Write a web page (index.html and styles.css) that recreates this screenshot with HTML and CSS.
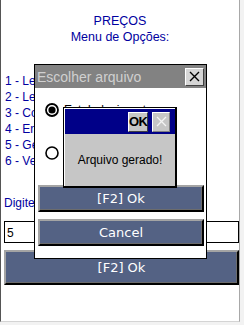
FILE: index.html
```html
<!DOCTYPE html>
<html lang="pt">
<head>
    <meta charset="UTF-8">
    <meta name="viewport" content="width=device-width, initial-scale=1.0">
    <title>Preços</title>
    <link rel="stylesheet" href="styles.css">
</head>
<body>

    <div class="screen">
        <div class="header">
            <p>PREÇOS</p>
            <p>Menu de Opções:</p>
        </div>

        <ul class="menu">
            <li>1 - Levantamento</li>
            <li>2 - Leitura</li>
            <li>3 - Consulta</li>
            <li>4 - Enviar</li>
            <li>5 - Gerar</li>
            <li>6 - Ver</li>
        </ul>

        <p class="prompt">Digite a opção:</p>
        <div class="field">5</div>
        <button class="btn btn-main">[F2] Ok</button>

        <!-- file chooser dialog -->
        <div class="dialog">
            <div class="dialog-title">
                <span>Escolher arquivo</span>
                <span class="close-btn">
                    <svg width="11" height="11" viewBox="0 0 11 11">
                        <path d="M1 1 L10 10 M10 1 L1 10" stroke="#000" stroke-width="1.4"/>
                    </svg>
                </span>
            </div>
            <div class="dialog-body">
                <label class="radio-row">
                    <svg class="radio" width="14" height="14" viewBox="0 0 14 14">
                        <circle cx="7" cy="7" r="6" fill="#fff" stroke="#000" stroke-width="1.8"/>
                        <circle cx="7" cy="7" r="3.6" fill="#000"/>
                    </svg>
                    <span>Estabelecimento</span>
                </label>
                <label class="radio-row second">
                    <svg class="radio" width="14" height="14" viewBox="0 0 14 14">
                        <circle cx="7" cy="7" r="6" fill="#fff" stroke="#000" stroke-width="1.6"/>
                    </svg>
                    <span>Produtos</span>
                </label>
                <button class="btn btn-dialog first">[F2] Ok</button>
                <button class="btn btn-dialog">Cancel</button>
            </div>
        </div>

        <!-- message box -->
        <div class="msgbox">
            <div class="msg-title">
                <span class="ok-btn">OK</span>
                <span class="x-btn">
                    <svg width="11" height="11" viewBox="0 0 11 11">
                        <path d="M1 1 L10 10 M10 1 L1 10" stroke="#f4f4f4" stroke-width="1.3"/>
                    </svg>
                </span>
            </div>
            <div class="msg-body">Arquivo gerado!</div>
        </div>
    </div>

</body>
</html>
```

FILE: styles.css
```css
/* base */
* {
    margin: 0;
    padding: 0;
    box-sizing: border-box;
}

body {
    width: 244px;
    height: 325px;
    background: #f2f2f2;
    font-family: 'Liberation Sans', Arial, sans-serif;
    font-size: 12px;
    overflow: hidden;
}

.screen {
    position: relative;
    width: 240px;
    height: 322px;
    background: #fff;
    border-left: 1px solid #555;
    border-right: 1px solid #a8a8a8;
    border-bottom: 1px solid #d4d4d4;
}

/* page content */
.header {
    padding-top: 13px;
    text-align: center;
    color: #0000a0;
    font-size: 12.5px;
    line-height: 16px;
}

.menu {
    list-style: none;
    margin-top: 28px;
    padding-left: 4px;
    color: #0000a0;
    line-height: 16px;
}

.prompt {
    margin-top: 26px;
    padding-left: 3px;
    color: #0000a0;
    line-height: 16px;
}

.field {
    margin: 10px 0 0 3px;
    width: 235px;
    height: 22px;
    border: 1px solid #000;
    padding: 3px 0 0 2px;
    color: #000;
    line-height: 16px;
}

.btn {
    display: block;
    background: #546284;
    color: #fff;
    font-family: 'DejaVu Sans', sans-serif;
    font-size: 13px;
    border-style: solid;
    border-width: 2px;
    border-color: #a4a4a4 #000 #000 #a4a4a4;
    box-shadow: inset -1px -1px 0 #6c6c6c;
    text-align: center;
}

.btn-main {
    margin: 7px 0 0 3px;
    width: 235px;
    height: 35px;
    line-height: 30px;
}

/* file chooser dialog */
.dialog {
    position: absolute;
    left: 33px;
    top: 64px;
    width: 173px;
    height: 195px;
    background: #fff;
    border: 1px solid #000;
}

.dialog-title {
    display: flex;
    align-items: center;
    justify-content: space-between;
    height: 23px;
    padding: 0 2px;
    background: #828282;
    color: #d0d0d0;
    font-size: 14px;
}

.close-btn {
    display: flex;
    align-items: center;
    justify-content: center;
    width: 19px;
    height: 18px;
    background: #d6d6d6;
    border: 1px solid;
    border-color: #fff #404040 #404040 #fff;
}

.dialog-body {
    display: flex;
    flex-direction: column;
    padding: 15px 0 0 10px;
}

.radio-row {
    display: flex;
    align-items: center;
    gap: 5px;
    height: 14px;
    color: #000;
}

.radio-row.second {
    margin-top: 29px;
}

.btn-dialog {
    margin: 7px 0 0 -7px;
    width: 166px;
    height: 27px;
    line-height: 22px;
}

.btn-dialog.first {
    margin-top: 25px;
}

/* message box */
.msgbox {
    position: absolute;
    left: 62px;
    top: 107px;
    width: 114px;
    height: 81px;
    background: #c6c6c6;
    border: 1px solid #000;
    border-right-width: 2px;
    border-bottom-width: 2px;
    padding: 1px 0 0 1px;
    box-shadow: inset 1px 1px 0 #fff;
}

.msg-title {
    display: flex;
    align-items: center;
    justify-content: flex-end;
    gap: 4px;
    height: 25px;
    padding-right: 5px;
    background: #000088;
}

.ok-btn {
    width: 20px;
    height: 20px;
    background: #c6c6c6;
    border: 1px solid;
    border-color: #fff #404040 #404040 #fff;
    font-weight: bold;
    font-size: 13px;
    line-height: 18px;
    text-align: center;
    letter-spacing: -0.5px;
    color: #000;
}

.x-btn {
    display: flex;
    align-items: center;
    justify-content: center;
    width: 18px;
    height: 20px;
    background: #c6c6c6;
    border: 1px solid;
    border-color: #fff #808080 #808080 #fff;
}

.msg-body {
    height: 52px;
    line-height: 52px;
    text-align: center;
    color: #000;
}
```
